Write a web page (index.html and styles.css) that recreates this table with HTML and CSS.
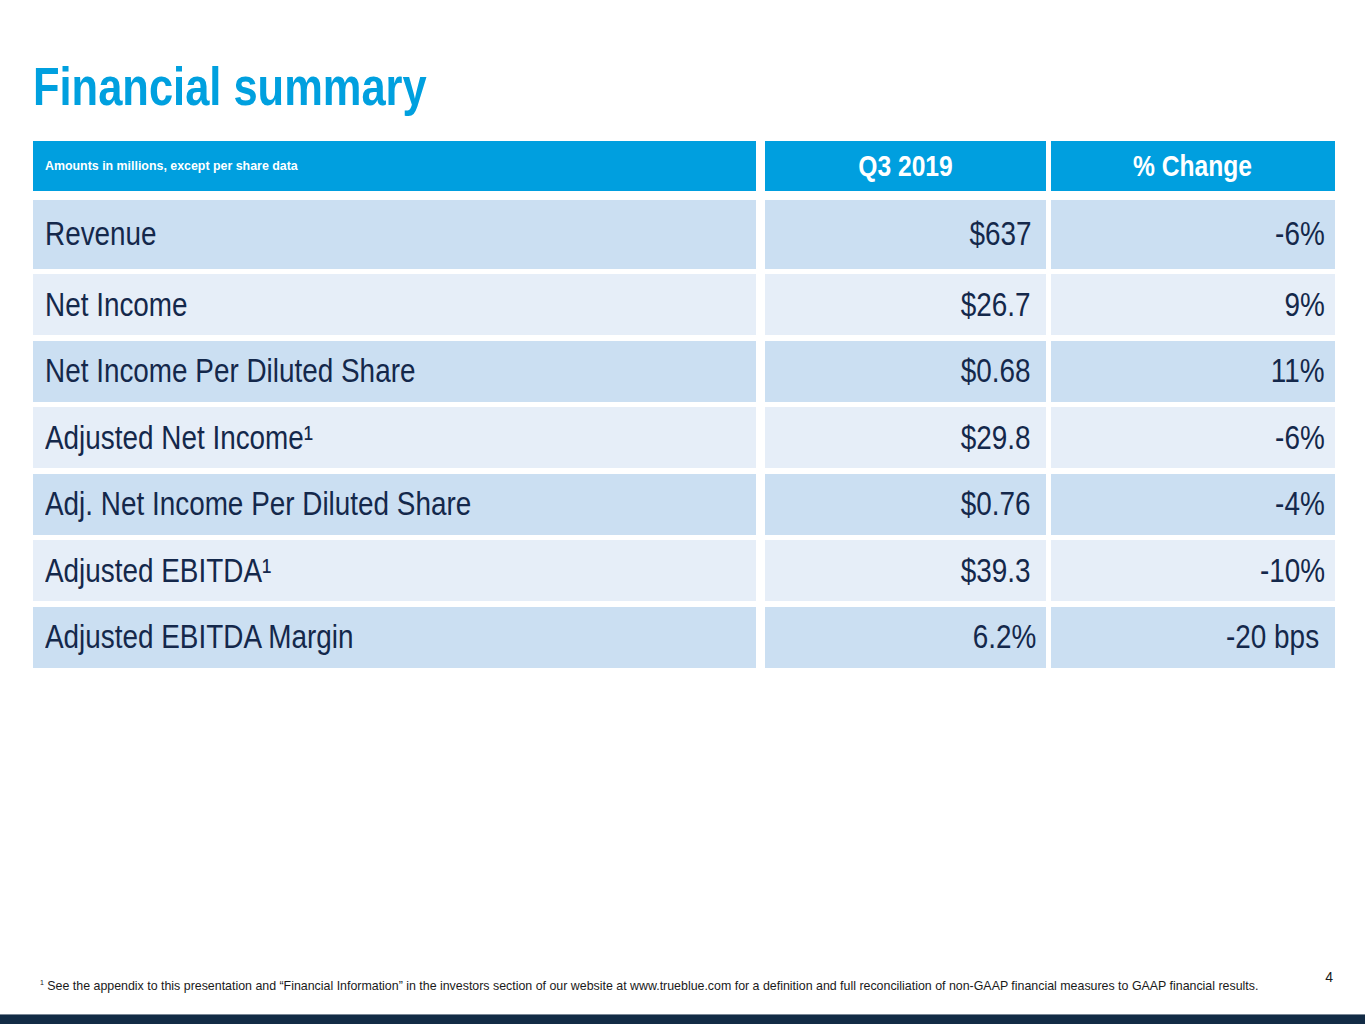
FILE: index.html
```html
<!DOCTYPE html>
<html lang="en">
<head>
<meta charset="utf-8">
<title>Financial summary</title>
<link rel="stylesheet" href="styles.css">
</head>
<body>
<div class="slide">
  <h1 class="title"><span class="nl">Financial summary</span></h1>
  <div class="table">
    <div class="thead">
      <div class="th th-label">Amounts in millions, except per share data</div>
      <div class="th"><span class="nc">Q3 2019</span></div>
      <div class="th"><span class="nc">% Change</span></div>
    </div>
    <div class="tbody">
      <div class="td label dark"><span class="nl">Revenue</span></div>
      <div class="td num dark"><span class="nr">$637</span></div>
      <div class="td num2 dark"><span class="nr">-6%</span></div>

      <div class="td label light"><span class="nl">Net Income</span></div>
      <div class="td num light"><span class="nr">$26.7</span></div>
      <div class="td num2 light"><span class="nr">9%</span></div>

      <div class="td label dark"><span class="nl">Net Income Per Diluted Share</span></div>
      <div class="td num dark"><span class="nr">$0.68</span></div>
      <div class="td num2 dark"><span class="nr">11%</span></div>

      <div class="td label light"><span class="nl">Adjusted Net Income¹</span></div>
      <div class="td num light"><span class="nr">$29.8</span></div>
      <div class="td num2 light"><span class="nr">-6%</span></div>

      <div class="td label dark"><span class="nl">Adj. Net Income Per Diluted Share</span></div>
      <div class="td num dark"><span class="nr">$0.76</span></div>
      <div class="td num2 dark"><span class="nr">-4%</span></div>

      <div class="td label light"><span class="nl">Adjusted EBITDA¹</span></div>
      <div class="td num light"><span class="nr">$39.3</span></div>
      <div class="td num2 light"><span class="nr">-10%</span></div>

      <div class="td label dark"><span class="nl">Adjusted EBITDA Margin</span></div>
      <div class="td num dark pct"><span class="nr">6.2%</span></div>
      <div class="td num2 dark bps"><span class="nr">-20 bps</span></div>
    </div>
  </div>
  <div class="spacer"></div>
  <div class="footer">
    <p class="footnote"><sup>1</sup> See the appendix to this presentation and “Financial Information” in the investors section of our website at www.trueblue.com for a definition and full reconciliation of non-GAAP financial measures to GAAP financial results.</p>
    <span class="page">4</span>
  </div>
  <div class="bottombar"></div>
</div>
</body>
</html>
```

FILE: styles.css
```css
* { box-sizing: border-box; }
html, body { margin: 0; padding: 0; background: #fff; }
body {
  font-family: "Liberation Sans", Arial, sans-serif;
  color: #14284b;
}
.slide {
  width: 1365px;
  height: 1024px;
  display: flex;
  flex-direction: column;
  overflow: hidden;
}
/* condensed text (Arial Narrow look) */
.nl, .nr, .nc {
  display: inline-block;
  white-space: pre;
  transform: scaleX(0.845);
}
.nl { transform-origin: left center; }
.nr { transform-origin: right center; }
.nc { transform-origin: center center; transform: scaleX(0.82); }
.title {
  margin: 60px 0 0 33px;
  font-size: 53px;
  line-height: 1;
  font-weight: 700;
  color: #00a0df;
}
.title .nl { transform: scaleX(0.82); }
.table {
  margin: 28px 0 0 33px;
  width: 1302px;
}
.thead, .tbody {
  display: grid;
  grid-template-columns: 727px 281px 284px;
  column-gap: 5px;
}
.thead { margin-bottom: 9px; }
.tbody {
  grid-template-rows: 68.5px repeat(6, 61px);
  row-gap: 5.5px;
}
.th {
  height: 50px;
  background: #009fdf;
  color: #fff;
  font-weight: 700;
  font-size: 30px;
  display: flex;
  align-items: center;
  justify-content: center;
}
.th-label {
  margin-right: 4px;
  justify-content: flex-start;
  padding-left: 12px;
  font-size: 12.4px;
}
.td {
  display: flex;
  align-items: center;
  font-size: 33px;
}
.label { margin-right: 4px; padding-left: 12px; }
.num { justify-content: flex-end; padding-right: 15px; }
.num2 { justify-content: flex-end; padding-right: 10px; }
.num.pct { padding-right: 10px; }
.num2.bps { padding-right: 16px; }
.dark { background: #cbdff2; }
.light { background: #e6eef8; }
.spacer { flex: 1; }
.footer {
  display: flex;
  justify-content: space-between;
  align-items: flex-start;
  padding: 0 32px 0 40px;
  height: 46px;
}
.footnote {
  margin: 8px 0 0 0;
  font-size: 12.4px;
  line-height: 14px;
  color: #1a1a1a;
}
.footnote sup {
  font-size: 7px;
  vertical-align: 5px;
}
.page {
  margin-top: 1px;
  font-size: 14px;
  color: #1a1a1a;
}
.bottombar {
  height: 10px;
  background: #122b45;
  border-top: 1px solid #7a8796;
}
```
